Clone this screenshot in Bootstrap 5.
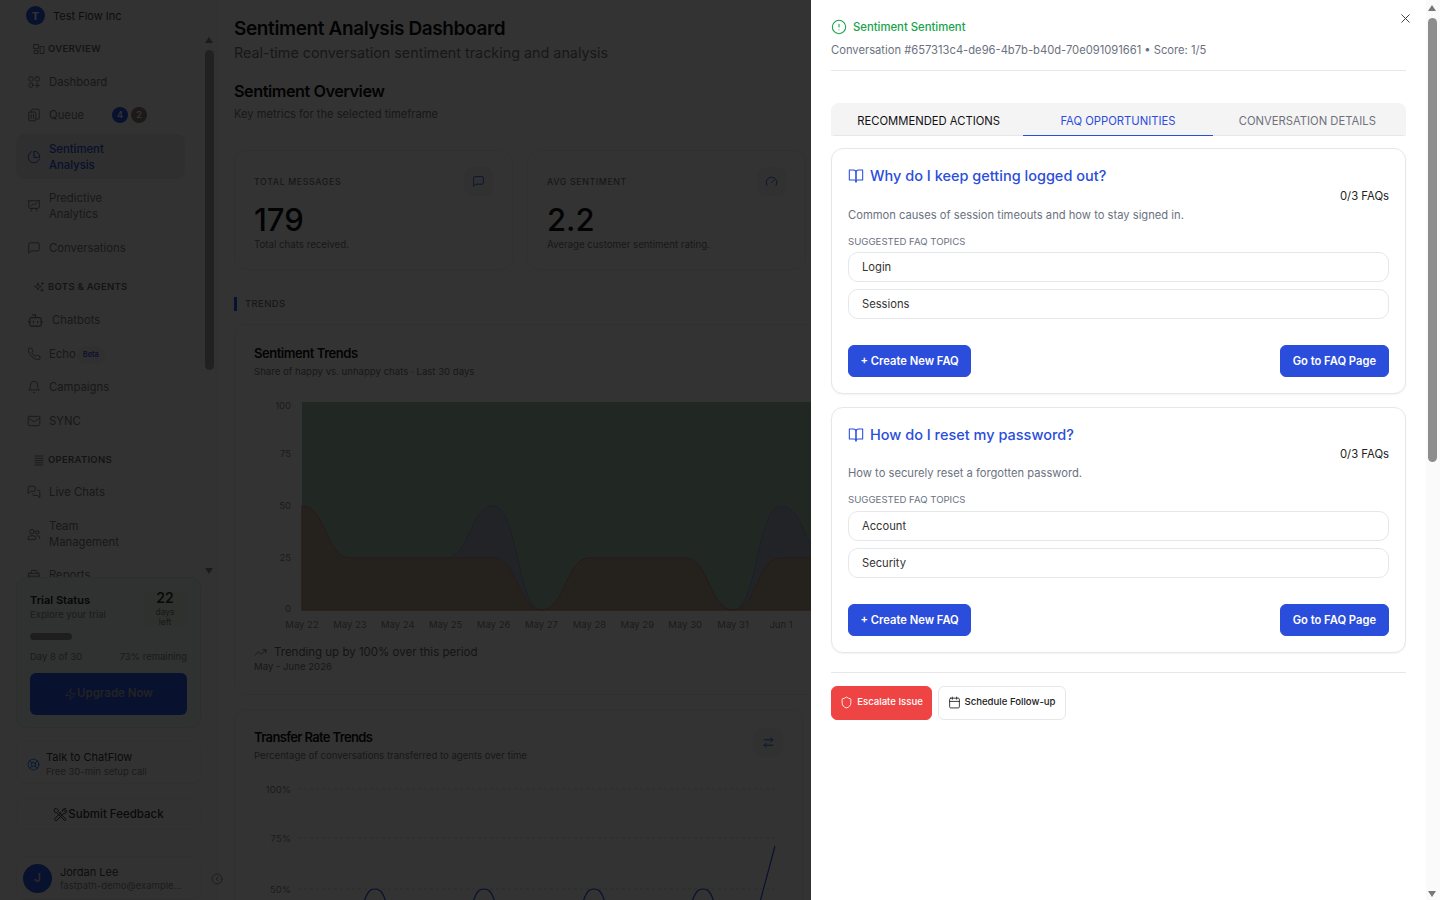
<!DOCTYPE html>
<html lang="en">
<head>
<meta charset="UTF-8">
<meta name="viewport" content="width=device-width, initial-scale=1.0">
<title>Sentiment Analysis Dashboard</title>
<link href="https://cdn.jsdelivr.net/npm/bootstrap@5.3.0/dist/css/bootstrap.min.css" rel="stylesheet">
<style>
    html, body { height: 100%; overflow: hidden; }
    body { font-family: Inter, "Liberation Sans", sans-serif; background: #fff; color: #0a0a0a; font-size: 12px; }
    svg.ic { fill: none; stroke: currentColor; stroke-width: 1.6; stroke-linecap: round; stroke-linejoin: round; flex: none; }

    /* sidebar */
    .side-col { width: 218px; height: 900px; background: #fbfbfb; border-right: 1px solid #eee; position: relative; flex: none; }
    .side-head { height: 32px; padding: 0 0 0 26px; gap: 8px; font-size: 11px; color: #444; }
    .ava-sm { width: 19px; height: 19px; border-radius: 50%; background: #2b55e0; color: #fff; font-size: 11px; font-weight: 700; }
    .side-nav { height: 547px; overflow: hidden; padding: 10px 32px 0 16px; position: relative; }
    .sec-label { height: 14px; margin: 0 0 11px 17px; gap: 3px; font-size: 9.5px; font-weight: 600; letter-spacing: .03em; color: #666; text-transform: uppercase; }
    .sec-label.gap-top { margin-top: 18px; }
    .sec-label.sec-tight { margin-bottom: 10px; }
    .nav-row { min-height: 29.5px; margin-bottom: 4px; padding: 0 8px 0 11px; gap: 8px; font-size: 11.3px; line-height: 16px; color: #777; border-radius: 8px; }
    .nav-row.multi { min-height: 45.5px; }
    .nav-row.on { background: #e3e9e5; color: #2b55e0; font-weight: 500; }
    .count-dot { width: 16px; height: 16px; border-radius: 50%; color: #fff; font-size: 9px; font-weight: 600; }
    .beta-tag { font-size: 7.5px; font-weight: 500; color: #2b55e0; background: #e8eeec; border-radius: 8px; padding: 1px 6px; margin: 3px 0 0 -7px; }
    .fake-bar { position: absolute; left: 205px; top: 32px; width: 10px; height: 547px; }
    .fake-thumb { position: absolute; left: 0; top: 18px; width: 9px; height: 320px; border-radius: 5px; background: #a9a6a6; }
    .tri-up, .tri-down { position: absolute; left: 0; width: 0; height: 0; border-left: 4.5px solid transparent; border-right: 4.5px solid transparent; }
    .tri-up { top: 5px; border-bottom: 6px solid #888; }
    .tri-down { bottom: 5px; border-top: 6px solid #888; }
    .trial-box { margin: 0 16px; height: 151px; padding: 12px 13px; background: #eef6f2; border: 1px solid #d9e8e1; border-radius: 10px; flex: none; }
    .trial-name { font-size: 11px; font-weight: 600; line-height: 14px; margin-top: 3px; color: #222; }
    .mini-txt { font-size: 9.5px; line-height: 13px; color: #888; }
    .trial-ex { margin-top: 1px; }
    .days-box { width: 44px; height: 36px; margin-top: 1px; background: #e8f2ec; border-radius: 6px; color: #777; font-size: 8.5px; line-height: 10px; text-align: center; }
    .days-box b { display: block; font-size: 14px; line-height: 14px; margin-bottom: 2px; font-weight: 600; color: #333; }
    .trial-prog { height: 7px; width: 42px; border-radius: 4px; background: #9d9494; margin-top: 6px; }
    .trial-meta { margin-top: 10px; }
    .up-btn { height: 42px; margin-top: 10px; gap: 0; border-radius: 6px; background: #2b55e0; color: #aab; font-size: 11.5px; font-weight: 600; }
    .talk-box { margin: 13px 16px 0; height: 43px; padding: 3px 0 0 10px; gap: 6px; border: 1px solid #eee; border-radius: 8px; font-size: 11px; line-height: 14px; color: #333; flex: none; }
    .talk-box .mini-txt { margin-top: 1px; }
    .fb-box { margin: 14px 16px 0; height: 32px; padding-top: 1px; gap: 0; border: 1px solid #eee; border-radius: 8px; font-size: 11.5px; font-weight: 500; color: #333; flex: none; }
    .user-box { margin: 26px 16px 0; height: 44px; padding-left: 6px; gap: 8px; border: 1px solid #f0f0f0; border-radius: 8px; font-size: 11px; line-height: 14px; color: #444; flex: none; }
    .ava-lg { width: 29px; height: 29px; border-radius: 50%; background: #2b55e0; color: #ccd; font-size: 12px; font-weight: 600; flex: none; }
    .fold-btn { position: absolute; left: 211px; top: 873px; width: 12px; height: 12px; color: #777; background: #fbfbfb; }

    /* main */
    .main-col { overflow: hidden; padding: 19px 0 0 16px; flex: 1 1 auto; }
    .main-in { width: 573px; }
    .page-h { font-size: 19px; line-height: 20px; font-weight: 600; letter-spacing: -.02em; margin: 0; color: #111; }
    .page-sub { font-size: 14.35px; line-height: 18px; margin: 5px 0 0; color: #777; }
    .sec-h { font-size: 16.3px; line-height: 22px; font-weight: 600; letter-spacing: -.03em; margin: 18px 0 0; color: #111; }
    .sec-sub { font-size: 11.15px; line-height: 16px; margin: 4px 0 0; color: #777; }
    .stat-row { margin-top: 28px; gap: 14px; }
    .stat-card { width: 279px; height: 120px; padding: 16px 19px; border-radius: 12px; border-color: #efefef; }
    .stat-lab { font-size: 8.8px; font-weight: 500; letter-spacing: .07em; color: #777; }
    .ic-box { width: 29px; height: 29px; background: #eef2f1; border-radius: 8px; color: #2b55e0; flex: none; }
    .stat-num { font-size: 31px; line-height: 30px; font-weight: 500; margin-top: 9px; color: #111; }
    .stat-note { font-size: 9.7px; line-height: 14px; margin-top: 3px; color: #777; }
    .trend-lab { margin-top: 27px; height: 14px; gap: 8px; font-size: 9.5px; font-weight: 500; letter-spacing: .04em; color: #777; }
    .trend-lab i { width: 3px; height: 14px; background: #2b55e0; }
    .chart-card { margin-top: 13px; width: 640px; height: 371px; padding: 19px 19px 0; border-radius: 12px; border-color: #efefef; }
    .chart-h { font-size: 13px; line-height: 18px; font-weight: 600; letter-spacing: -.035em; color: #111; }
    .chart-sub { font-size: 9.6px; line-height: 14px; margin-top: 3px; color: #777; }
    .chart-foot { gap: 7px; margin-top: 13px; font-size: 11.5px; line-height: 16px; color: #666; flex: none; }
    .chart-foot + .chart-sub { margin-top: 0; }
    .chart-plot { margin-top: 14px; flex: none; }
    .chart-card svg text, .rate-card svg text { font-family: Inter, "Liberation Sans", sans-serif; font-size: 9.5px; fill: #888; }
    .rate-card { margin-top: 14px; width: 569px; height: 260px; padding: 18px 19px 0; border-radius: 12px; border-color: #efefef; }
    .rate-card .chart-h { letter-spacing: -.05em; }
    .rate-plot { margin-top: 19px; flex: none; }

    /* sheet */
    .pg-dim.show { opacity: 1; background: rgba(0, 0, 0, .8); }
    .pg-sheet { --bs-offcanvas-width: 629px; border-left: 0 !important; flex-direction: row; transition: none; }
    .sheet-in { width: 615px; padding: 19px 20px 0; position: relative; }
    .sheet-bar { width: 14px; position: relative; background: #fafafa; }
    .sheet-thumb { position: absolute; left: 2px; top: 18px; width: 9px; height: 444px; border-radius: 5px; background: #8d8d8d; }
    .sheet-bar .tri-up { left: 2px; top: 5px; border-bottom-color: #777; }
    .sheet-bar .tri-down { left: 2px; bottom: 3px; border-top-color: #777; }
    .x-btn { position: absolute; right: 13px; top: 11px; width: 15px; height: 15px; color: #444; background: none; border: 0; padding: 0; }
    .sent-h { line-height: 16px; gap: 6px; font-size: 11.3px; font-weight: 500; color: #16a34a; }
    .conv-line { font-size: 11.2px; line-height: 16px; margin-top: 7px; padding-bottom: 12px; border-bottom: 1px solid #e5e7eb; color: #6b7280; }
    .tab-bar { margin-top: 32px; height: 33px; background: #f4f4f5; border-radius: 8px 8px 0 0; position: relative; flex-wrap: nowrap; }
    .tab-bar::after { content: ""; position: absolute; left: 2px; right: 2px; bottom: 0; height: 1px; background: #e5e7eb; }
    .tab-bar .nav-link { flex: 1 1 0; padding: 3px 0 0; height: 33px; font-size: 11.25px; color: #71717a; border: 0; border-radius: 0; text-transform: uppercase; position: relative; z-index: 1; }
    .tab-bar .nav-link.first-tab { color: #111; padding-left: 3px; }
    .tab-bar .nav-link.last-tab { padding-right: 4px; }
    .tab-bar .nav-link.active { color: #2b4ddb; background: none; padding-top: 4px; border-bottom: 1px solid #2b4ddb; }
    .faq-card { margin-top: 12px; height: 246px; padding: 17px 16px; border-radius: 12px; border-color: #e5e7eb; box-shadow: 0 1px 2px rgba(0, 0, 0, .05); }
    .faq-card > * { flex: none; }
    .faq-card + .faq-card { margin-top: 13px; }
    .faq-h { line-height: 20px; gap: 6px; font-size: 14.5px; font-weight: 500; color: #2b4ddb; }
    .faq-cnt { font-size: 11.3px; line-height: 16px; margin-top: 2px; text-align: right; color: #222; }
    .faq-card + .faq-card .faq-cnt { margin-top: 1px; }
    .faq-desc { font-size: 11.2px; line-height: 16px; margin-top: 3px; color: #6b7280; }
    .faq-lab { font-size: 9.6px; line-height: 12px; margin-top: 13px; color: #6b7280; text-transform: uppercase; }
    .topic-box { height: 30px; padding: 1px 0 0 13px; margin-top: 4px; border: 1px solid #e5e7eb; border-radius: 10px; font-size: 11.2px; color: #333; }
    .faq-card + .faq-card .faq-lab + .topic-box { margin-top: 5px; }
    .topic-box + .topic-box { margin-top: 7px; }
    .faq-acts { margin-top: 26px; }
    .blue-btn { --bs-btn-bg: #2b4ddb; --bs-btn-border-color: #2b4ddb; --bs-btn-hover-bg: #2b4ddb; height: 32px; padding: 0 11.5px; border-radius: 6px; font-size: 11.2px; font-weight: 600; }
    .faq-acts .blue-btn:last-child { padding: 0 12px; }
    .sheet-rule { margin: 19px 0 13px; border-top: 1px solid #e5e7eb; }
    .act-row { gap: 6px; }
    .esc-btn { height: 34px; width: 101px; padding: 0 0 1px; gap: 4px; background: #ef4444; border-color: #ef4444; color: #fff; border-radius: 6px; font-size: 9.6px; font-weight: 500; }
    .sched-btn { height: 34px; width: 128px; padding: 0 0 1px; gap: 3px; background: #fff; border: 1px solid #e5e7eb; color: #222; border-radius: 6px; font-size: 9.6px; font-weight: 500; }
</style>
</head>
<body>
<svg width="0" height="0" class="position-absolute">
    <defs>
        <symbol id="i-overview" viewBox="0 0 24 24"><rect x="2" y="3" width="9" height="8"/><rect x="15" y="7" width="7" height="14"/><rect x="3" y="15" width="7" height="6"/></symbol>
        <symbol id="i-grid" viewBox="0 0 24 24"><rect x="3" y="3" width="7.5" height="7.5" rx="3"/><rect x="14" y="3" width="7.5" height="7.5" rx="3"/><circle cx="6.8" cy="17.5" r="3.8"/><path d="M17.5 14v7.5M14 17.8h7.5"/></symbol>
        <symbol id="i-queue" viewBox="0 0 24 24"><rect x="3" y="7" width="12" height="15" rx="1"/><path d="M8 7V3a1 1 0 0 1 1-1h10a2 2 0 0 1 2 2v14a1 1 0 0 1-1 1h-5M7 11v7M11 11v7"/></symbol>
        <symbol id="i-pie" viewBox="0 0 24 24"><path d="M21.2 15.9A10 10 0 1 1 8 2.8"/><path d="M22 12A10 10 0 0 0 12 2v10z"/></symbol>
        <symbol id="i-board" viewBox="0 0 24 24"><path d="M2 3h20M21 3v11a2 2 0 0 1-2 2H5a2 2 0 0 1-2-2V3M7 21l2-5M17 21l-2-5M7 12l4-4 2 2 4-4"/></symbol>
        <symbol id="i-chat" viewBox="0 0 24 24"><path d="M21 15a2 2 0 0 1-2 2H7l-4 4V5a2 2 0 0 1 2-2h14a2 2 0 0 1 2 2z"/></symbol>
        <symbol id="i-spark" viewBox="0 0 24 24"><path d="M10 4l1.6 5L17 11l-5.4 2L10 18l-1.6-5L3 11l5.4-2zM19 3v4M17 5h4M18 16v5M15.5 18.5h5"/></symbol>
        <symbol id="i-bot" viewBox="0 0 24 24"><path d="M12 8V4H8"/><rect x="4" y="8" width="16" height="12" rx="2"/><path d="M2 14h2M20 14h2M15 13v2M9 13v2"/></symbol>
        <symbol id="i-phone" viewBox="0 0 24 24"><path d="M22 16.92v3a2 2 0 0 1-2.18 2 19.79 19.79 0 0 1-8.63-3.07 19.5 19.5 0 0 1-6-6 19.79 19.79 0 0 1-3.07-8.67A2 2 0 0 1 4.11 2h3a2 2 0 0 1 2 1.72 12.84 12.84 0 0 0 .7 2.81 2 2 0 0 1-.45 2.11L8.09 9.91a16 16 0 0 0 6 6l1.27-1.27a2 2 0 0 1 2.11-.45 12.84 12.84 0 0 0 2.81.7A2 2 0 0 1 22 16.92z"/></symbol>
        <symbol id="i-bell" viewBox="0 0 24 24"><path d="M6 8a6 6 0 0 1 12 0c0 7 3 9 3 9H3s3-2 3-9M10.3 21a1.94 1.94 0 0 0 3.4 0"/></symbol>
        <symbol id="i-mail" viewBox="0 0 24 24"><rect x="2" y="4" width="20" height="16" rx="2"/><path d="M22 7l-8.97 5.7a1.94 1.94 0 0 1-2.06 0L2 7"/></symbol>
        <symbol id="i-lines" viewBox="0 0 24 24"><path d="M4 4h16M4 8.5h16M4 13h16M4 17.5h16M4 22h16"/></symbol>
        <symbol id="i-chats" viewBox="0 0 24 24"><path d="M14 9a2 2 0 0 1-2 2H6l-4 4V4a2 2 0 0 1 2-2h8a2 2 0 0 1 2 2z"/><path d="M18 9h2a2 2 0 0 1 2 2v11l-4-4h-6a2 2 0 0 1-2-2v-1"/></symbol>
        <symbol id="i-team" viewBox="0 0 24 24"><path d="M15 21v-1.5a4.5 4.5 0 0 0-4.5-4.5h-4A4.5 4.5 0 0 0 2 19.5V21z"/><circle cx="8.5" cy="8" r="4"/><path d="M22 20v-1a4 4 0 0 0-4-4h-1"/><circle cx="17.5" cy="9" r="2.8"/></symbol>
        <symbol id="i-report" viewBox="0 0 24 24"><path d="M6 9l2-5h8l2 5M3 9h18v11H3zM3 14h18"/></symbol>
        <symbol id="i-zap" viewBox="0 0 24 24"><path d="M13 2 3 14h9l-1 8 10-12h-9l1-8z"/></symbol>
        <symbol id="i-buoy" viewBox="0 0 24 24"><circle cx="12" cy="12" r="10"/><circle cx="12" cy="12" r="4"/><path d="m4.93 4.93 4.24 4.24M14.83 9.17l4.24-4.24M14.83 14.83l4.24 4.24M9.17 14.83l-4.24 4.24"/></symbol>
        <symbol id="i-tools" viewBox="0 0 24 24"><path d="M15 6.5a4 4 0 0 1 5.5-4l-3 3 1.5 2 2.500-2.500a4 4 0 0 1-5 5.500L6.500 21a2 2 0 0 1-3.500-2.500L13.500 8M3 3l2.500-1 3 3-.5 2 13 13-2 2-13-13-2 .5-2-3z"/></symbol>
        <symbol id="i-gauge" viewBox="0 0 24 24"><path d="m12 14 4-4M3.34 19a10 10 0 1 1 17.32 0"/></symbol>
        <symbol id="i-swap" viewBox="0 0 24 24"><path d="M20 7H4M16 3l4 4-4 4M4 17h16M8 21l-4-4 4-4"/></symbol>
        <symbol id="i-trend" viewBox="0 0 24 24"><path d="m22 7-8.5 8.5-5-5L2 17M16 7h6v6"/></symbol>
        <symbol id="i-alert" viewBox="0 0 24 24"><circle cx="12" cy="12" r="10"/><path d="M12 8v4M12 16h.01"/></symbol>
        <symbol id="i-book" viewBox="0 0 24 24"><path d="M2 3h6a4 4 0 0 1 4 4v14a3 3 0 0 0-3-3H2z"/><path d="M22 3h-6a4 4 0 0 0-4 4v14a3 3 0 0 1 3-3h7z"/></symbol>
        <symbol id="i-shield" viewBox="0 0 24 24"><path d="M20 13c0 5-3.5 7.5-7.66 8.95a1 1 0 0 1-.67-.01C7.5 20.5 4 18 4 13V6a1 1 0 0 1 1-1c2 0 4.5-1.2 6.24-2.72a1.17 1.17 0 0 1 1.52 0C14.51 3.81 17 5 19 5a1 1 0 0 1 1 1z"/></symbol>
        <symbol id="i-cal" viewBox="0 0 24 24"><rect x="3" y="4" width="18" height="18" rx="2"/><path d="M8 2v4M16 2v4M3 10h18"/></symbol>
        <symbol id="i-x" viewBox="0 0 24 24"><path d="M18 6 6 18M6 6l12 12"/></symbol>
        <symbol id="i-fold" viewBox="0 0 24 24"><circle cx="12" cy="12" r="10"/><path d="M14 8l-4 4 4 4"/></symbol>
    </defs>
</svg>

<div class="d-flex vh-100">
    <aside class="side-col d-flex flex-column">
        <div class="side-head d-flex align-items-center">
            <span class="ava-sm d-flex align-items-center justify-content-center">T</span>
            <span>Test Flow Inc</span>
        </div>
        <div class="side-nav">
            <div class="sec-label d-flex align-items-center"><svg class="ic" width="12" height="12"><use href="#i-overview"/></svg>Overview</div>
            <div class="nav-row d-flex align-items-center"><svg class="ic" width="14" height="14"><use href="#i-grid"/></svg>Dashboard</div>
            <div class="nav-row d-flex align-items-center" id="queueRow"><svg class="ic" width="14" height="14"><use href="#i-queue"/></svg><span class="queue-name">Queue</span></div>
            <div class="nav-row multi on d-flex align-items-center"><svg class="ic" width="14" height="14"><use href="#i-pie"/></svg><span>Sentiment<br>Analysis</span></div>
            <div class="nav-row multi d-flex align-items-center"><svg class="ic" width="14" height="14"><use href="#i-board"/></svg><span>Predictive<br>Analytics</span></div>
            <div class="nav-row d-flex align-items-center"><svg class="ic" width="14" height="14"><use href="#i-chat"/></svg>Conversations</div>
            <div class="sec-label gap-top d-flex align-items-center"><svg class="ic" width="12" height="12"><use href="#i-spark"/></svg>Bots &amp; Agents</div>
            <div class="nav-row d-flex align-items-center"><svg class="ic" width="17" height="17"><use href="#i-bot"/></svg>Chatbots</div>
            <div class="nav-row d-flex align-items-center"><svg class="ic" width="14" height="14"><use href="#i-phone"/></svg>Echo<span class="beta-tag">Beta</span></div>
            <div class="nav-row d-flex align-items-center"><svg class="ic" width="14" height="14"><use href="#i-bell"/></svg>Campaigns</div>
            <div class="nav-row d-flex align-items-center"><svg class="ic" width="14" height="14"><use href="#i-mail"/></svg>SYNC</div>
            <div class="sec-label gap-top sec-tight d-flex align-items-center"><svg class="ic" width="12" height="12"><use href="#i-lines"/></svg>Operations</div>
            <div class="nav-row d-flex align-items-center"><svg class="ic" width="14" height="14"><use href="#i-chats"/></svg>Live Chats</div>
            <div class="nav-row multi d-flex align-items-center"><svg class="ic" width="14" height="14"><use href="#i-team"/></svg><span>Team<br>Management</span></div>
            <div class="nav-row d-flex align-items-center"><svg class="ic" width="14" height="14"><use href="#i-report"/></svg>Reports</div>
        </div>
        <div class="trial-box">
            <div class="d-flex justify-content-between">
                <div>
                    <div class="trial-name">Trial Status</div>
                    <div class="mini-txt trial-ex">Explore your trial</div>
                </div>
                <div class="days-box"><b>22</b>days<br>left</div>
            </div>
            <div class="trial-prog"></div>
            <div class="d-flex justify-content-between mini-txt trial-meta"><span>Day 8 of 30</span><span>73% remaining</span></div>
            <div class="up-btn d-flex align-items-center justify-content-center"><svg class="ic" width="13" height="13"><use href="#i-zap"/></svg>Upgrade Now</div>
        </div>
        <div class="talk-box d-flex align-items-center">
            <svg class="ic text-primary" width="13" height="13"><use href="#i-buoy"/></svg>
            <div>Talk to ChatFlow<div class="mini-txt">Free 30-min setup call</div></div>
        </div>
        <div class="fb-box d-flex align-items-center justify-content-center"><svg class="ic" width="15" height="15"><use href="#i-tools"/></svg>Submit Feedback</div>
        <div class="user-box d-flex align-items-center">
            <span class="ava-lg d-flex align-items-center justify-content-center">J</span>
            <div>Jordan Lee<div class="mini-txt">fastpath-demo@example...</div></div>
        </div>
        <div class="fake-bar"><span class="tri-up"></span><span class="fake-thumb"></span><span class="tri-down"></span></div>
        <div class="fold-btn d-flex"><svg class="ic" width="12" height="12"><use href="#i-fold"/></svg></div>
    </aside>

    <main class="main-col">
        <div class="main-in">
            <h1 class="page-h">Sentiment Analysis Dashboard</h1>
            <p class="page-sub">Real-time conversation sentiment tracking and analysis</p>
            <h2 class="sec-h">Sentiment Overview</h2>
            <p class="sec-sub">Key metrics for the selected timeframe</p>

            <div class="stat-row d-flex">
                <div class="card stat-card">
                    <div class="d-flex justify-content-between align-items-center">
                        <span class="stat-lab">TOTAL MESSAGES</span>
                        <span class="ic-box d-flex align-items-center justify-content-center"><svg class="ic" width="13" height="13"><use href="#i-chat"/></svg></span>
                    </div>
                    <div class="stat-num">179</div>
                    <div class="stat-note">Total chats received.</div>
                </div>
                <div class="card stat-card">
                    <div class="d-flex justify-content-between align-items-center">
                        <span class="stat-lab">AVG SENTIMENT</span>
                        <span class="ic-box d-flex align-items-center justify-content-center"><svg class="ic" width="13" height="13"><use href="#i-gauge"/></svg></span>
                    </div>
                    <div class="stat-num">2.2</div>
                    <div class="stat-note">Average customer sentiment rating.</div>
                </div>
            </div>

            <div class="trend-lab d-flex align-items-center"><i></i>TRENDS</div>

            <div class="card chart-card">
                <div class="chart-h">Sentiment Trends</div>
                <div class="chart-sub">Share of happy vs. unhappy chats · Last 30 days</div>
                <svg id="sentChart" class="d-block chart-plot" width="580" height="238" viewBox="254 393 580 238">
                    <rect x="302" y="402" width="530" height="208" fill="#a3c9b0"/>
                    <path id="areaBlue" fill="#a8aebc" stroke="#7f93c8" stroke-width=".8"/>
                    <path id="areaOrange" fill="#b8ac92" stroke="#c9776a" stroke-width=".8"/>
                    <g text-anchor="end">
                        <text x="291" y="409">100</text><text x="291" y="457">75</text><text x="291" y="509">50</text><text x="291" y="561">25</text><text x="291" y="612">0</text>
                    </g>
                    <g id="xTicks" text-anchor="middle"></g>
                </svg>
                <div class="chart-foot d-flex align-items-center"><svg class="ic" width="13" height="13"><use href="#i-trend"/></svg>Trending up by 100% over this period</div>
                <div class="chart-sub">May - June 2026</div>
            </div>

            <div class="card rate-card">
                <div class="d-flex justify-content-between">
                    <div>
                        <div class="chart-h">Transfer Rate Trends</div>
                        <div class="chart-sub">Percentage of conversations transferred to agents over time</div>
                    </div>
                    <span class="ic-box d-flex align-items-center justify-content-center"><svg class="ic" width="13" height="13"><use href="#i-swap"/></svg></span>
                </div>
                <svg class="d-block rate-plot" width="530" height="120" viewBox="254 782 530 120">
                    <g stroke="#bbb" stroke-width=".6" stroke-dasharray="3 3">
                        <path d="M298 789H777M298 838H777M298 889H777"/>
                    </g>
                    <g text-anchor="end"><text x="291" y="793">100%</text><text x="291" y="842">75%</text><text x="291" y="893">50%</text></g>
                    <path fill="none" stroke="#2b55e0" stroke-width="1.2" d="M364 902C368 890 371 889 375 889S382 890 386 902M473 902C477 890 480 889 484 889S491 890 495 902M583 902C587 890 590 889 594 889S601 890 605 902M692 902C696 890 699 889 703 889S710 890 714 902M760 902L775 846"/>
                </svg>
            </div>
        </div>
    </main>
</div>

<div class="offcanvas-backdrop show pg-dim"></div>
<div class="offcanvas offcanvas-end show pg-sheet" data-bs-backdrop="false" data-bs-scroll="true">
    <div class="sheet-in">
        <button type="button" class="x-btn d-flex" aria-label="Close"><svg class="ic" width="15" height="15"><use href="#i-x"/></svg></button>
        <div class="sent-h d-flex align-items-center"><svg class="ic" width="16" height="16"><use href="#i-alert"/></svg>Sentiment Sentiment</div>
        <div class="conv-line">Conversation #657313c4-de96-4b7b-b40d-70e091091661 • Score: 1/5</div>

        <ul class="nav tab-bar">
            <li class="nav-link first-tab d-flex align-items-center justify-content-center">Recommended Actions</li>
            <li class="nav-link active d-flex align-items-center justify-content-center">FAQ Opportunities</li>
            <li class="nav-link last-tab d-flex align-items-center justify-content-center">Conversation Details</li>
        </ul>

        <div class="card faq-card">
            <div class="faq-h d-flex align-items-center"><svg class="ic" width="16" height="16"><use href="#i-book"/></svg>Why do I keep getting logged out?</div>
            <div class="faq-cnt">0/3 FAQs</div>
            <div class="faq-desc">Common causes of session timeouts and how to stay signed in.</div>
            <div class="faq-lab">Suggested FAQ Topics</div>
            <div class="topic-box d-flex align-items-center">Login</div>
            <div class="topic-box d-flex align-items-center">Sessions</div>
            <div class="faq-acts d-flex justify-content-between">
                <button type="button" class="btn btn-primary blue-btn">+ Create New FAQ</button>
                <button type="button" class="btn btn-primary blue-btn">Go to FAQ Page</button>
            </div>
        </div>
        <div class="card faq-card">
            <div class="faq-h d-flex align-items-center"><svg class="ic" width="16" height="16"><use href="#i-book"/></svg>How do I reset my password?</div>
            <div class="faq-cnt">0/3 FAQs</div>
            <div class="faq-desc">How to securely reset a forgotten password.</div>
            <div class="faq-lab">Suggested FAQ Topics</div>
            <div class="topic-box d-flex align-items-center">Account</div>
            <div class="topic-box d-flex align-items-center">Security</div>
            <div class="faq-acts d-flex justify-content-between">
                <button type="button" class="btn btn-primary blue-btn">+ Create New FAQ</button>
                <button type="button" class="btn btn-primary blue-btn">Go to FAQ Page</button>
            </div>
        </div>

        <div class="sheet-rule"></div>
        <div class="d-flex act-row">
            <button type="button" class="btn esc-btn d-flex align-items-center justify-content-center"><svg class="ic" width="13" height="13"><use href="#i-shield"/></svg>Escalate Issue</button>
            <button type="button" class="btn sched-btn d-flex align-items-center justify-content-center"><svg class="ic" width="13" height="13"><use href="#i-cal"/></svg>Schedule Follow-up</button>
        </div>
    </div>
    <div class="sheet-bar"><span class="tri-up"></span><span class="sheet-thumb"></span><span class="tri-down"></span></div>
</div>

<script src="https://cdn.jsdelivr.net/npm/bootstrap@5.3.0/dist/js/bootstrap.bundle.min.js"></script>
<script>
    // stacked sentiment areas, one value per day
    const labels = ['May 22', 'May 23', 'May 24', 'May 25', 'May 26', 'May 27', 'May 28', 'May 29', 'May 30', 'May 31', 'Jun 1', 'Jun 2'];
    const unhappy = [50, 25, 25, 25, 25, 0, 25, 25, 25, 0, 25, 25];
    const neutral = [50, 25, 25, 25, 50, 0, 25, 25, 25, 0, 50, 25];
    const xAt = i => 302 + 47.9 * i;
    const yAt = v => 610 - v * 2.08;

    function areaPath(vals) {
        let d = `M${xAt(0)} 610L${xAt(0)} ${yAt(vals[0])}`;
        for (let i = 1; i < vals.length; i++) {
            const mid = (xAt(i - 1) + xAt(i)) / 2;
            d += `C${mid} ${yAt(vals[i - 1])} ${mid} ${yAt(vals[i])} ${xAt(i)} ${yAt(vals[i])}`;
        }
        return d + `L${xAt(vals.length - 1)} 610Z`;
    }
    document.getElementById('areaBlue').setAttribute('d', areaPath(neutral));
    document.getElementById('areaOrange').setAttribute('d', areaPath(unhappy));
    document.getElementById('xTicks').innerHTML = labels.slice(0, 11).map((l, i) =>
        `<text x="${xAt(i)}" y="628">${l}</text>`).join('');

    // queue counters
    const queueRow = document.getElementById('queueRow');
    queueRow.querySelector('.queue-name').style.width = '55px';
    [[4, '#2b55e0'], [2, '#8a7d78']].forEach(([n, col], i) => {
        const dot = document.createElement('span');
        dot.className = 'count-dot d-flex align-items-center justify-content-center';
        dot.textContent = n;
        dot.style.background = col;
        dot.style.marginLeft = i ? '-5px' : '0';
        queueRow.appendChild(dot);
    });
</script>
</body>
</html>
